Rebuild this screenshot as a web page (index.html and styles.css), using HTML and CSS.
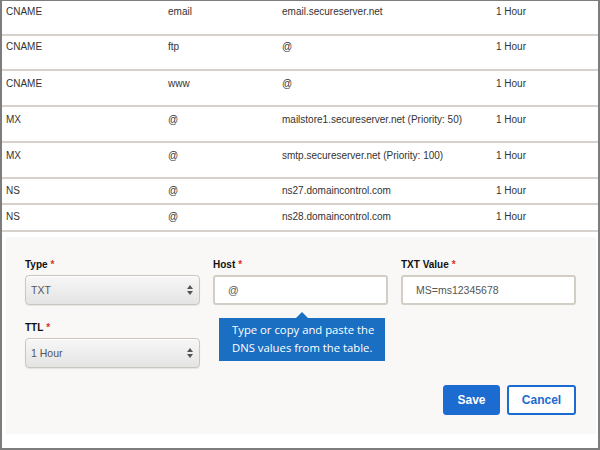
FILE: index.html
```html
<!DOCTYPE html>
<html>
<head>
<meta charset="utf-8">
<link rel="stylesheet" href="styles.css">
</head>
<body>
<div class="frame">
  <div class="table">
    <div class="row r35"><span>CNAME</span><span>email</span><span>email.secureserver.net</span><span>1 Hour</span></div>
    <div class="row r35"><span>CNAME</span><span>ftp</span><span>@</span><span>1 Hour</span></div>
    <div class="row r36"><span>CNAME</span><span>www</span><span>@</span><span>1 Hour</span></div>
    <div class="row r36"><span>MX</span><span>@</span><span>mailstore1.secureserver.net (Priority: 50)</span><span>1 Hour</span></div>
    <div class="row r36"><span>MX</span><span>@</span><span>smtp.secureserver.net (Priority: 100)</span><span>1 Hour</span></div>
    <div class="row r26"><span>NS</span><span>@</span><span>ns27.domaincontrol.com</span><span>1 Hour</span></div>
    <div class="row r27"><span>NS</span><span>@</span><span>ns28.domaincontrol.com</span><span>1 Hour</span></div>
  </div>
  <div class="panel">
    <div class="fields">
      <div class="field">
        <div class="label">Type<span class="req">*</span></div>
        <div class="select"><span>TXT</span>
          <svg class="arrows" width="6" height="10" viewBox="0 0 6 10"><path d="M3 0 L6 4 L0 4 Z M3 10 L6 6 L0 6 Z" fill="#555"/></svg>
        </div>
      </div>
      <div class="field host">
        <div class="label">Host<span class="req">*</span></div>
        <div class="input">@</div>
        <div class="tooltip">Type or copy and paste the<br>DNS values from the table.</div>
      </div>
      <div class="field">
        <div class="label">TXT Value<span class="req">*</span></div>
        <div class="input">MS=ms12345678</div>
      </div>
      <div class="field">
        <div class="label">TTL<span class="req">*</span></div>
        <div class="select"><span>1 Hour</span>
          <svg class="arrows" width="6" height="10" viewBox="0 0 6 10"><path d="M3 0 L6 4 L0 4 Z M3 10 L6 6 L0 6 Z" fill="#555"/></svg>
        </div>
      </div>
    </div>
    <div class="actions">
      <button class="btn save">Save</button>
      <button class="btn cancel">Cancel</button>
    </div>
  </div>
</div>
</body>
</html>
```

FILE: styles.css
```css
html, body { margin: 0; padding: 0; }
body { width: 600px; height: 450px; overflow: hidden; background: #fff; font-family: "Liberation Sans", Arial, sans-serif; }
.frame {
  width: 600px; height: 450px; box-sizing: border-box;
  border: 2px solid #7d7d7d; border-top-width: 1px;
  background: #fff;
  display: flex; flex-direction: column;
}
.table { display: flex; flex-direction: column; }
.row {
  display: grid;
  grid-template-columns: 162px 114px 214px 1fr;
  padding-left: 4px;
  box-sizing: border-box;
  border-bottom: 2px solid #d6d2cb;
  font-size: 10px; line-height: 12px; color: #333;
  padding-top: 6px;
}
.r35 { height: 35px; padding-top: 5px; }
.r36 { height: 36px; padding-top: 7px; }
.r26 { height: 26px; }
.r27 { height: 27px; padding-top: 6px; }

.panel {
  margin: 5px 2px 0 4px;
  background: #f9f8f6;
  padding: 22px 20px 19px 19px;
  display: flex; flex-direction: column;
}
.fields {
  display: grid;
  grid-template-columns: 175px 175px 175px;
  column-gap: 13px;
  row-gap: 17px;
}
.field { position: relative; }
.label {
  font-size: 10px; font-weight: bold; line-height: 12px; color: #111;
  margin-bottom: 4px;
}
.req { color: #d8322b; margin-left: 3px; }
.select {
  height: 30px; box-sizing: border-box;
  border: 1px solid #c9c6c0; border-radius: 4px;
  background: linear-gradient(#f7f7f7, #e4e4e4);
  box-shadow: inset 0 1px 0 #fff, 0 1px 1px rgba(0,0,0,0.08);
  display: flex; align-items: center; justify-content: space-between;
  padding: 0 6px 0 5px;
  font-size: 10.5px; color: #555;
}
.arrows { display: block; }
.input {
  height: 30px; box-sizing: border-box;
  border: 2px solid #d3cec5; border-radius: 3px;
  background: #fff;
  display: flex; align-items: center;
  padding-left: 13px;
  font-size: 10.5px; color: #555;
}
.tooltip {
  position: absolute; left: 6px; top: 59px;
  width: 166px; height: 43px; box-sizing: border-box;
  background: #1b6fc2; color: #fff;
  font-family: "Open Sans", "Noto Sans", sans-serif;
  font-size: 11.3px; line-height: 18px;
  padding: 3px 0 0 13px;
  z-index: 2;
}
.tooltip::before {
  content: ""; position: absolute; left: 77px; top: -6px;
  border-left: 6px solid transparent; border-right: 6px solid transparent;
  border-bottom: 6px solid #1b6fc2;
}
.actions {
  display: flex; justify-content: flex-end; gap: 7px;
  margin-top: 17px;
}
.btn {
  height: 30px; box-sizing: border-box; border-radius: 3px;
  font-family: "Liberation Sans", Arial, sans-serif;
  font-size: 12px; font-weight: bold;
  padding: 0; margin: 0;
}
.save { width: 57px; background: #1c6bd0; border: 1px solid #1c6bd0; color: #fff; }
.cancel { width: 69px; background: #fff; border: 2px solid #1c6bd0; color: #1c6bd0; }
```
